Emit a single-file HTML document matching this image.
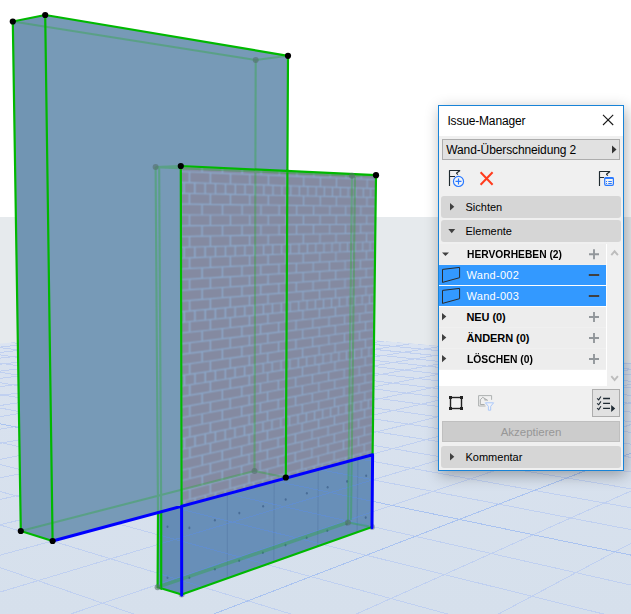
<!DOCTYPE html>
<html><head><meta charset="utf-8"><title>Issue-Manager</title>
<style>
html,body{margin:0;padding:0;background:#fff;}
body{width:631px;height:614px;position:relative;overflow:hidden;font-family:"Liberation Sans",sans-serif;}
.scene{position:absolute;left:0;top:0;display:block;}
.shadow{position:absolute;left:438px;top:105px;width:186px;height:366px;box-shadow:2px 4px 14px 0 rgba(0,0,0,0.31);}
.panel{position:absolute;left:438px;top:105px;width:184px;height:364px;border:1px solid #1883d7;background:#f0f0f0;color:#000;font-size:11px;}
.panel *{position:absolute;box-sizing:border-box;white-space:nowrap;}
.tbar{left:0;top:0;width:184px;height:30px;background:#fff;}
.title{left:8.4px;top:7px;font-size:12px;line-height:16px;color:#000;letter-spacing:-0.17px;}
.dd{left:3px;top:33px;width:178px;height:21px;border:1px solid #adadad;background:#e1e1e1;}
.dd span{left:3.3px;top:2px;font-size:12px;line-height:16px;letter-spacing:-0.12px;}
.hdr{left:2px;width:180px;height:22px;background:#d6d6d6;border-radius:3px;}
.hdr span{left:24.5px;top:4px;line-height:14px;font-size:11px;}
.list{left:0;top:138px;width:168px;height:142px;background:#fff;}
.row{left:0;width:167px;height:21px;background:#ededed;border-bottom:1px solid #f0f0f0;}
.row.sel{background:#3399ff;height:20px;color:#fff;border-bottom:0;}
.row span{left:27.5px;top:3px;line-height:14px;font-size:11px;}
.row b{left:27.5px;top:3px;line-height:14px;font-size:11px;font-weight:bold;}
.sb{left:168px;top:138px;width:16px;height:142px;background:#f0f0f0;}
.btn{border:1px solid #adadad;background:#e1e1e1;}
.acc{left:3px;top:315px;width:178px;height:21px;border:1px solid #bfbfbf;background:#cccccc;color:#979797;text-align:center;}
.acc span{left:0;width:176px;top:2.6px;line-height:14px;font-size:11.5px;text-align:center;}
svg.ic{left:0;top:0;overflow:visible;}

</style></head><body>
<svg class="scene" width="631" height="614" viewBox="0 0 631 614">
<defs><clipPath id="gc"><polygon points="0,343.6 211,326.3 631,362.9 631,614 0,614"/></clipPath><linearGradient id="gf" gradientUnits="userSpaceOnUse" x1="0" y1="326" x2="0" y2="614"><stop offset="0" stop-color="#dde5f3"/><stop offset="0.15" stop-color="#d9e2ef"/><stop offset="1" stop-color="#d6e0ec"/></linearGradient><filter id="bl" x="-5%" y="-5%" width="110%" height="110%"><feConvolveMatrix order="3" kernelMatrix="1 2 1 2 5 2 1 2 1" divisor="17" edgeMode="duplicate" preserveAlpha="true"/></filter><clipPath id="fc"><polygon points="180.8,166 376,175.2 372,527 181.7,594.5"/></clipPath></defs>
<rect width="631" height="614" fill="#fff"/>
<rect y="217" width="631" height="160" fill="#e6eaed"/>
<polygon points="0,343.6 211,326.3 631,362.9 631,614 0,614" fill="url(#gf)"/>
<g clip-path="url(#gc)" fill="none" shape-rendering="crispEdges"><path d="M-46883.6 5051L-45655.3 4921.3M-44863.4 5060.4L-23886.3 2738.6M-42843.3 5069.9L-15921 1940M-40823.1 5079.4L-11790.6 1525.8M-38802.9 5088.8L-9262.9 1272.4M-36782.8 5098.3L-7556.7 1101.3M-34762.6 5107.8L-6327.5 978.1M-32742.4 5117.2L-5399.8 885.1M-30722.3 5126.7L-4674.8 812.4M-28702.1 5136.2L-4092.6 754M-26681.9 5145.6L-3614.8 706.1M-24661.8 5155.1L-3215.6 666.1M-22641.6 5164.5L-2877.1 632.1M-20621.4 5174L-2586.4 603M-18601.3 5183.5L-2334.1 577.7M-16581.1 5192.9L-2113 555.5M-14560.9 5202.4L-1917.7 535.9M-12540.8 5211.9L-1743.9 518.5M-10520.6 5221.3L-1588.3 502.9M-8500.4 5230.8L-1448.1 488.8M-6480.2 5240.3L-1321.2 476.1M-4460.1 5249.7L-1205.7 464.5M-2439.9 5259.2L-1100.2 454M-419.7 5268.7L-1003.4 444.3M1600.4 5278.1L-914.4 435.3M3620.6 5287.6L-832.1 427.1M5640.8 5297L-755.9 419.4M7660.9 5306.5L-685.1 412.3M9681.1 5316L-619.2 405.7M11701.3 5325.4L-557.6 399.6M13721.4 5334.9L-500 393.8M15741.6 5344.4L-446 388.4M17761.8 5353.8L-395.2 383.3M19781.9 5363.3L-347.4 378.5M21802.1 5372.8L-302.4 374M25842.5 5391.7L-219.5 365.6M27862.6 5401.1L-181.3 361.8M29882.8 5410.6L-145.1 358.2M31903 5420.1L-110.7 354.7M33923.1 5429.5L-77.9 351.5M35943.3 5439L-46.7 348.3M37963.5 5448.5L-17 345.3M39983.6 5457.9L11.4 342.5M42003.8 5467.4L38.6 339.8M44024 5476.9L64.5 337.2M46044.1 5486.3L89.4 334.7M48064.3 5495.8L113.2 332.3M50084.5 5505.3L136.1 330M52104.6 5514.7L158.1 327.8M54124.8 5524.2L179.2 325.7M56145 5533.6L199.4 323.6M54425 5525.6L31491.7 3237.8M52637.2 5517.2L21426 2300.4M50849.3 5508.8L16118.2 1806.1M49061.5 5500.5L12839.7 1500.8M47273.6 5492.1L10613.6 1293.5M45485.8 5483.7L9003.1 1143.5M43697.9 5475.3L7783.9 1030M41910.1 5467L6828.9 941M40122.2 5458.6L6060.6 869.5M38334.4 5450.2L5429.1 810.7M36546.5 5441.8L4900.9 761.5M34758.7 5433.5L4452.5 719.7M32970.8 5425.1L4067.1 683.8M31183 5416.7L3732.3 652.6M29395.1 5408.3L3438.8 625.3M27607.3 5400L3179.3 601.2M25819.4 5391.6L2948.3 579.6M24031.6 5383.2L2741.4 560.4M22243.7 5374.8L2554.9 543M20455.9 5366.5L2385.9 527.3M18668 5358.1L2232.2 512.9M16880.2 5349.7L2091.7 499.9M15092.3 5341.3L1962.8 487.9M13304.5 5332.9L1844.1 476.8M11516.6 5324.6L1734.4 466.6M9728.8 5316.2L1632.9 457.1M7940.9 5307.8L1538.5 448.3M6153.1 5299.4L1450.5 440.2M4365.2 5291.1L1368.4 432.5M2577.4 5282.7L1291.6 425.4M789.5 5274.3L1219.5 418.6M-998.3 5265.9L1151.7 412.3M-2786.2 5257.6L1087.9 406.4M-4574 5249.2L1027.8 400.8M-6361.9 5240.8L970.9 395.5M-8149.7 5232.4L917.1 390.5M-9937.6 5224.1L866.1 385.7M-13513.3 5207.3L771.8 376.9M-15301.1 5198.9L728 372.9M-17089 5190.6L686.4 369M-18876.8 5182.2L646.6 365.3M-20664.7 5173.8L608.7 361.8M-22452.5 5165.4L572.4 358.4M-24240.4 5157.1L537.7 355.1M-26028.2 5148.7L504.5 352.1M-27816.1 5140.3L472.6 349.1M-29603.9 5131.9L442 346.2M-31391.8 5123.6L412.7 343.5M-33179.6 5115.2L384.5 340.9M-34967.5 5106.8L357.4 338.4M-36755.3 5098.4L331.3 335.9M-38543.2 5090.1L306.2 333.6M-40331 5081.7L281.9 331.3M-42118.9 5073.3L258.6 329.2M-43906.7 5064.9L236 327.1M-45694.6 5056.5L214.2 325" stroke="#c0d0f0" stroke-width="1"/><path d="M23822.3 5382.2L-259.8 369.7M-11725.4 5215.7L817.8 381.2" stroke="#aac3f0" stroke-width="1"/></g>
<polygon points="12.8,21.5 45.2,15 288,55.8 285.8,477.5 52.6,541 20.8,531" fill="#779ab7"/>
<polygon points="12.8,21.5 45.2,15 52.6,541 20.8,531" fill="#7195b3"/>
<polygon points="158,512.5 181.6,506.2 181.7,594.5 157.6,587.3" fill="#658cb5"/>
<g clip-path="url(#fc)">
<g filter="url(#bl)"><polygon points="176.8,162 380,171.2 376.8,458.5 177.5,510.6" fill="#8ca8ca"/>
<path d="M181.5 166L201.4 167L201.4 171.8L181.6 170.9ZM202.8 167L221.9 167.9L221.8 172.6L202.8 171.8ZM223.2 168L241.5 168.9L241.5 173.5L223.2 172.7ZM242.9 168.9L260.5 169.8L260.5 174.3L242.9 173.5ZM261.8 169.8L278.8 170.6L278.7 175L261.7 174.3ZM280 170.7L296.3 171.4L296.3 175.8L279.9 175.1ZM297.5 171.5L313.3 172.2L313.3 176.5L297.5 175.8ZM314.4 172.3L329.7 173L329.6 177.2L314.4 176.6ZM330.8 173.1L345.5 173.8L345.4 177.9L330.7 177.3ZM346.5 173.8L360.7 174.5L360.7 178.5L346.5 177.9ZM361.8 174.5L375.5 175.2L375.5 179.2L361.7 178.6ZM180.8 172.2L188.7 172.5L188.7 182L180.8 181.8ZM190.2 172.5L209.7 173.3L209.7 182.7L190.2 182.1ZM211.1 173.4L229.8 174.2L229.8 183.4L211.1 182.7ZM231.2 174.2L249.2 175L249.2 184L231.1 183.4ZM250.5 175L267.9 175.8L267.8 184.6L250.5 184ZM269.1 175.8L285.8 176.5L285.8 185.2L269.1 184.6ZM287 176.5L303.2 177.2L303.1 185.7L287 185.2ZM304.3 177.3L319.9 177.9L319.8 186.3L304.3 185.8ZM321 178L336 178.6L335.9 186.8L320.9 186.3ZM337.1 178.6L351.6 179.2L351.5 187.3L337 186.8ZM352.6 179.3L366.7 179.8L366.6 187.8L352.6 187.3ZM367.7 179.9L375.9 180.2L375.9 188.1L367.6 187.8ZM180.8 183L183.3 183.1L183.4 192.7L180.9 192.6ZM184.8 183.2L194 183.4L194 192.9L184.8 192.7ZM195.5 183.5L204.5 183.8L204.5 193.2L195.5 193ZM205.9 183.8L214.8 184.1L214.8 193.4L205.9 193.2ZM216.2 184.1L224.8 184.4L224.8 193.6L216.2 193.4ZM226.2 184.5L234.7 184.7L234.7 193.8L226.2 193.6ZM236 184.8L244.4 185L244.4 194L236 193.9ZM245.7 185.1L253.9 185.3L253.9 194.3L245.7 194.1ZM255.2 185.4L263.2 185.6L263.2 194.5L255.2 194.3ZM264.5 185.6L272.4 185.9L272.3 194.7L264.4 194.5ZM273.6 185.9L281.4 186.2L281.3 194.9L273.6 194.7ZM282.6 186.2L290.2 186.4L290.1 195.1L282.5 194.9ZM291.4 186.5L298.8 186.7L298.8 195.3L291.3 195.1ZM300 186.8L307.3 187L307.3 195.4L299.9 195.3ZM308.5 187L315.7 187.2L315.6 195.6L308.4 195.5ZM316.8 187.3L323.9 187.5L323.8 195.8L316.8 195.7ZM325 187.5L332 187.7L331.9 196L324.9 195.8ZM333 187.8L339.9 188L339.8 196.2L333 196ZM340.9 188L347.7 188.2L347.6 196.3L340.9 196.2ZM348.7 188.3L355.3 188.5L355.2 196.5L348.6 196.4ZM356.4 188.5L362.8 188.7L362.8 196.7L356.3 196.5ZM363.9 188.7L370.2 188.9L370.2 196.8L363.8 196.7ZM371.2 189L375.8 189.1L375.8 197L371.2 196.9ZM180.9 193.9L188.7 194.1L188.7 203.6L180.9 203.5ZM190.2 194.1L209.7 194.5L209.7 203.8L190.2 203.6ZM211.1 194.5L229.8 194.9L229.8 204.1L211.1 203.9ZM231.1 195L249.1 195.3L249.1 204.3L231.1 204.1ZM250.4 195.4L267.8 195.7L267.7 204.5L250.4 204.3ZM269 195.8L285.7 196.1L285.7 204.8L269 204.6ZM286.9 196.1L303 196.5L303 205L286.9 204.8ZM304.2 196.5L319.7 196.8L319.7 205.2L304.1 205ZM320.9 196.8L335.9 197.2L335.8 205.4L320.8 205.2ZM336.9 197.2L351.4 197.5L351.3 205.5L336.9 205.4ZM352.5 197.5L366.5 197.8L366.4 205.7L352.4 205.6ZM367.5 197.8L375.7 198L375.7 205.8L367.4 205.7ZM181.6 204.8L201.4 205L201.4 214.4L181.6 214.3ZM202.8 205L221.8 205.2L221.8 214.4L202.8 214.4ZM223.2 205.2L241.5 205.4L241.5 214.4L223.2 214.4ZM242.8 205.4L260.4 205.6L260.3 214.5L242.8 214.4ZM261.6 205.6L278.6 205.8L278.5 214.5L261.6 214.5ZM279.8 205.8L296.1 206L296.1 214.5L279.8 214.5ZM297.3 206L313.1 206.2L313 214.6L297.3 214.5ZM314.2 206.2L329.4 206.4L329.3 214.6L314.1 214.6ZM330.5 206.4L345.2 206.5L345.1 214.6L330.4 214.6ZM346.2 206.5L360.4 206.7L360.3 214.7L346.2 214.6ZM361.4 206.7L375.1 206.9L375.1 214.7L361.3 214.7ZM180.9 215.6L188.8 215.6L188.8 225.1L180.9 225.2ZM190.2 215.6L209.7 215.6L209.7 224.9L190.2 225.1ZM211.1 215.6L229.8 215.6L229.8 224.7L211.1 224.9ZM231.1 215.6L249.1 215.6L249.1 224.6L231.1 224.7ZM250.4 215.6L267.7 215.7L267.7 224.4L250.4 224.6ZM268.9 215.7L285.6 215.7L285.6 224.3L268.9 224.4ZM286.8 215.7L302.9 215.7L302.9 224.1L286.8 224.3ZM304.1 215.7L319.6 215.7L319.5 224L304 224.1ZM320.7 215.7L335.7 215.7L335.6 223.9L320.6 224ZM336.8 215.7L351.2 215.7L351.2 223.7L336.7 223.9ZM352.3 215.7L366.3 215.7L366.2 223.6L352.2 223.7ZM367.3 215.7L375.5 215.7L375.5 223.5L367.2 223.6ZM181.7 226.4L201.4 226.2L201.4 235.6L181.7 235.9ZM202.8 226.2L221.8 226L221.8 235.2L202.8 235.6ZM223.2 226L241.4 225.8L241.4 234.8L223.2 235.2ZM242.7 225.8L260.3 225.7L260.3 234.5L242.7 234.8ZM261.6 225.6L278.5 225.5L278.5 234.2L261.5 234.5ZM279.7 225.5L296 225.3L296 233.8L279.7 234.1ZM297.2 225.3L312.9 225.2L312.9 233.5L297.1 233.8ZM314.1 225.2L329.2 225L329.2 233.2L314 233.5ZM330.3 225L345 224.9L344.9 232.9L330.3 233.2ZM346.1 224.8L360.2 224.7L360.1 232.7L346 232.9ZM361.2 224.7L374.9 224.6L374.9 232.4L361.2 232.6ZM180.9 237.2L188.8 237.1L188.8 246.5L181 246.7ZM190.2 237L209.7 236.7L209.7 245.9L190.3 246.5ZM211.1 236.6L229.7 236.3L229.7 245.4L211.1 245.9ZM231.1 236.2L249 235.9L249 244.8L231.1 245.3ZM250.3 235.9L267.6 235.5L267.6 244.3L250.3 244.8ZM268.9 235.5L285.5 235.2L285.5 243.8L268.8 244.2ZM286.7 235.1L302.8 234.8L302.7 243.3L286.7 243.7ZM304 234.8L319.5 234.5L319.4 242.8L303.9 243.2ZM320.6 234.5L335.5 234.2L335.5 242.3L320.5 242.8ZM336.6 234.2L351.1 233.9L351 241.9L336.5 242.3ZM352.1 233.9L366.1 233.6L366 241.5L352 241.9ZM367.1 233.6L375.3 233.4L375.2 241.2L367 241.4ZM181 248L183.5 247.9L183.5 257.4L181 257.5ZM184.9 247.9L194.1 247.6L194.1 257L184.9 257.4ZM195.5 247.6L204.5 247.3L204.5 256.6L195.6 257ZM205.9 247.3L214.8 247L214.8 256.2L205.9 256.6ZM216.1 247L224.8 246.7L224.8 255.8L216.1 256.2ZM226.1 246.7L234.6 246.4L234.6 255.5L226.1 255.8ZM235.9 246.4L244.3 246.1L244.2 255.1L235.9 255.4ZM245.6 246.1L253.7 245.8L253.7 254.7L245.5 255ZM255 245.8L263 245.6L263 254.4L255 254.7ZM264.3 245.5L272.1 245.3L272.1 254L264.2 254.3ZM273.4 245.3L281.1 245L281 253.7L273.3 254ZM282.3 245L289.9 244.8L289.8 253.3L282.2 253.6ZM291 244.7L298.5 244.5L298.4 253L291 253.3ZM299.6 244.5L307 244.3L306.9 252.7L299.6 252.9ZM308.1 244.2L315.3 244L315.2 252.3L308 252.6ZM316.4 244L323.5 243.8L323.4 252L316.3 252.3ZM324.6 243.7L331.5 243.5L331.4 251.7L324.5 252ZM332.6 243.5L339.4 243.3L339.3 251.4L332.5 251.7ZM340.5 243.3L347.1 243.1L347.1 251.1L340.4 251.4ZM348.2 243L354.8 242.8L354.7 250.8L348.1 251.1ZM355.8 242.8L362.3 242.6L362.2 250.5L355.7 250.8ZM363.3 242.6L369.7 242.4L369.6 250.2L363.2 250.5ZM370.7 242.4L375.2 242.2L375.1 250L370.6 250.2ZM181 258.8L188.8 258.5L188.8 267.9L181 268.3ZM190.3 258.4L209.7 257.6L209.7 266.9L190.3 267.8ZM211.1 257.6L229.7 256.8L229.7 265.9L211.1 266.8ZM231 256.8L249 256.1L249 265L231 265.8ZM250.3 256L267.5 255.3L267.5 264.1L250.3 264.9ZM268.8 255.3L285.4 254.6L285.4 263.2L268.8 264ZM286.6 254.6L302.7 253.9L302.6 262.4L286.6 263.1ZM303.8 253.9L319.3 253.3L319.3 261.5L303.8 262.3ZM320.4 253.2L335.4 252.6L335.3 260.8L320.4 261.5ZM336.4 252.6L350.9 252L350.8 260L336.4 260.7ZM351.9 252L365.9 251.4L365.8 259.3L351.9 260ZM366.9 251.4L375.1 251L375 258.8L366.8 259.2ZM181.8 269.5L201.4 268.5L201.4 277.8L181.8 279ZM202.9 268.4L221.8 267.5L221.8 276.6L202.9 277.7ZM223.1 267.4L241.3 266.5L241.3 275.5L223.1 276.5ZM242.6 266.5L260.2 265.6L260.1 274.4L242.6 275.4ZM261.4 265.5L278.3 264.7L278.3 273.3L261.4 274.3ZM279.5 264.6L295.8 263.8L295.7 272.3L279.5 273.2ZM297 263.7L312.7 263L312.6 271.3L296.9 272.2ZM313.8 262.9L328.9 262.2L328.9 270.3L313.7 271.2ZM330 262.1L344.7 261.4L344.6 269.4L330 270.3ZM345.7 261.3L359.9 260.6L359.8 268.5L345.6 269.3ZM360.9 260.6L374.5 259.9L374.5 267.6L360.8 268.5ZM181 280.3L188.9 279.8L188.9 289.2L181.1 289.7ZM190.3 279.7L209.7 278.6L209.7 287.8L190.3 289.1ZM211.1 278.5L229.7 277.4L229.7 286.4L211.1 287.7ZM231 277.3L248.9 276.2L248.9 285.1L231 286.3ZM250.2 276.1L267.5 275.1L267.4 283.8L250.2 285ZM268.7 275L285.3 274L285.3 282.6L268.7 283.7ZM286.5 273.9L302.6 273L302.5 281.4L286.5 282.5ZM303.7 272.9L319.2 272L319.1 280.2L303.7 281.3ZM320.3 271.9L335.2 271L335.1 279.1L320.2 280.2ZM336.3 271L350.7 270.1L350.6 278.1L336.2 279.1ZM351.8 270L365.7 269.2L365.6 277L351.7 278ZM366.7 269.1L374.9 268.6L374.8 276.4L366.6 277ZM181.8 290.9L201.5 289.6L201.5 298.8L181.8 300.4ZM202.9 289.5L221.8 288.1L221.8 297.2L202.9 298.7ZM223.1 288.1L241.3 286.8L241.3 295.7L223.1 297.1ZM242.6 286.7L260.1 285.5L260.1 294.2L242.6 295.6ZM261.4 285.4L278.2 284.2L278.2 292.8L261.3 294.1ZM279.4 284.1L295.7 283L295.6 291.4L279.4 292.7ZM296.9 282.9L312.5 281.8L312.5 290.1L296.8 291.3ZM313.7 281.7L328.8 280.7L328.7 288.8L313.6 290ZM329.9 280.6L344.5 279.6L344.4 287.6L329.8 288.7ZM345.5 279.5L359.7 278.5L359.6 286.4L345.5 287.5ZM360.7 278.4L374.3 277.5L374.3 285.2L360.6 286.3ZM181.1 301.7L188.9 301.1L188.9 310.5L181.1 311.1ZM190.3 301L209.7 299.4L209.7 308.6L190.4 310.3ZM211.1 299.3L229.7 297.8L229.6 306.8L211.1 308.5ZM231 297.7L248.9 296.3L248.9 305.1L231 306.7ZM250.2 296.2L267.4 294.8L267.4 303.5L250.1 305ZM268.6 294.7L285.2 293.4L285.2 301.9L268.6 303.4ZM286.4 293.3L302.4 292L302.4 300.4L286.4 301.8ZM303.6 291.9L319 290.7L319 298.9L303.5 300.3ZM320.1 290.6L335.1 289.4L335 297.5L320.1 298.8ZM336.1 289.3L350.5 288.1L350.5 296.1L336.1 297.4ZM351.6 288.1L365.5 286.9L365.4 294.8L351.5 296ZM366.5 286.9L374.7 286.2L374.6 293.9L366.4 294.7ZM181.1 312.4L183.6 312.2L183.6 321.6L181.1 321.8ZM185 312L194.2 311.2L194.2 320.5L185.1 321.4ZM195.6 311.1L204.6 310.3L204.6 319.5L195.6 320.4ZM206 310.2L214.7 309.4L214.7 318.5L206 319.4ZM216.1 309.2L224.7 308.5L224.7 317.5L216.1 318.4ZM226.1 308.3L234.5 307.6L234.5 316.5L226.1 317.4ZM235.8 307.5L244.1 306.7L244.1 315.6L235.8 316.4ZM245.4 306.6L253.5 305.9L253.5 314.7L245.4 315.5ZM254.8 305.8L262.8 305L262.8 313.7L254.8 314.5ZM264 304.9L271.9 304.2L271.8 312.9L264 313.6ZM273.1 304.1L280.8 303.4L280.7 312L273.1 312.7ZM282 303.3L289.5 302.6L289.5 311.1L281.9 311.9ZM290.7 302.5L298.1 301.9L298.1 310.3L290.7 311ZM299.3 301.7L306.6 301.1L306.5 309.4L299.2 310.1ZM307.7 301L314.9 300.3L314.8 308.6L307.7 309.3ZM316 300.2L323 299.6L323 307.8L315.9 308.5ZM324.1 299.5L331 298.9L331 307L324.1 307.7ZM332.1 298.8L338.9 298.2L338.8 306.2L332 306.9ZM340 298.1L346.6 297.5L346.6 305.5L339.9 306.1ZM347.7 297.4L354.2 296.8L354.2 304.7L347.6 305.4ZM355.3 296.7L361.7 296.1L361.6 304L355.2 304.6ZM362.7 296L369.1 295.5L369 303.2L362.6 303.9ZM370.1 295.4L374.6 295L374.6 302.7L370 303.1ZM181.1 323.1L188.9 322.3L188.9 331.6L181.1 332.5ZM190.4 322.1L209.7 320.2L209.7 329.4L190.4 331.5ZM211.1 320.1L229.6 318.2L229.6 327.2L211.1 329.2ZM231 318.1L248.8 316.3L248.8 325.1L231 327.1ZM250.1 316.2L267.3 314.4L267.3 323.1L250.1 325ZM268.6 314.3L285.1 312.7L285.1 321.2L268.5 323ZM286.3 312.5L302.3 310.9L302.3 319.3L286.3 321ZM303.5 310.8L318.9 309.3L318.8 317.5L303.4 319.2ZM320 309.2L334.9 307.7L334.8 315.7L319.9 317.4ZM336 307.6L350.4 306.1L350.3 314.1L335.9 315.6ZM351.4 306L365.3 304.6L365.2 312.4L351.3 314ZM366.3 304.5L374.5 303.7L374.5 311.4L366.2 312.3ZM181.9 333.6L201.5 331.5L201.5 340.7L181.9 343ZM202.9 331.3L221.7 329.3L221.7 338.3L202.9 340.5ZM223.1 329.1L241.2 327.1L241.2 336L223.1 338.1ZM242.5 327L260 325.1L259.9 333.8L242.5 335.8ZM261.2 324.9L278 323.1L278 331.6L261.2 333.6ZM279.2 322.9L295.5 321.1L295.4 329.5L279.2 331.5ZM296.6 321L312.3 319.3L312.2 327.6L296.6 329.4ZM313.4 319.2L328.5 317.5L328.4 325.6L313.3 327.4ZM329.6 317.4L344.2 315.8L344.1 323.8L329.5 325.5ZM345.2 315.7L359.3 314.1L359.2 322L345.1 323.6ZM360.3 314L373.9 312.5L373.9 320.2L360.2 321.8ZM181.2 344.4L189 343.4L189 352.8L181.2 353.8ZM190.4 343.3L209.7 341L209.7 350.1L190.4 352.6ZM211.1 340.8L229.6 338.6L229.6 347.5L211.1 349.9ZM230.9 338.4L248.8 336.3L248.8 345.1L230.9 347.4ZM250.1 336.1L267.2 334L267.2 342.7L250 344.9ZM268.5 333.9L285 331.9L285 340.4L268.4 342.5ZM286.2 331.8L302.2 329.8L302.1 338.2L286.2 340.2ZM303.3 329.7L318.8 327.9L318.7 336L303.3 338ZM319.9 327.7L334.7 325.9L334.7 334L319.8 335.9ZM335.8 325.8L350.2 324.1L350.1 332L335.7 333.8ZM351.2 324L365.1 322.3L365 330.1L351.1 331.9ZM366.1 322.2L374.3 321.2L374.3 328.9L366 329.9ZM181.9 354.9L201.5 352.4L201.5 361.6L181.9 364.3ZM202.9 352.2L221.7 349.7L221.7 358.8L202.9 361.4ZM223.1 349.6L241.2 347.2L241.2 356.1L223.1 358.6ZM242.5 347L259.9 344.8L259.9 353.5L242.5 355.9ZM261.2 344.6L278 342.4L277.9 351L261.1 353.3ZM279.2 342.3L295.3 340.2L295.3 348.5L279.1 350.8ZM296.5 340L312.1 338L312.1 346.2L296.5 348.4ZM313.3 337.8L328.3 335.9L328.3 344L313.2 346.1ZM329.4 335.7L344 333.8L343.9 341.8L329.4 343.8ZM345 333.7L359.1 331.9L359 339.7L345 341.6ZM360.1 331.7L373.8 330L373.7 337.7L360.1 339.6ZM181.2 365.6L189 364.5L189 373.8L181.2 375ZM190.4 364.3L209.7 361.6L209.7 370.7L190.4 373.6ZM211.1 361.4L229.6 358.8L229.6 367.8L211.1 370.5ZM230.9 358.7L248.7 356.2L248.7 364.9L230.9 367.6ZM250 356L267.2 353.6L267.1 362.2L250 364.7ZM268.4 353.4L284.9 351.1L284.9 359.6L268.4 362ZM286.1 350.9L302.1 348.7L302 357L286.1 359.4ZM303.2 348.5L318.6 346.4L318.6 354.5L303.2 356.8ZM319.7 346.2L334.6 344.1L334.5 352.2L319.7 354.4ZM335.7 344L350 342L349.9 349.9L335.6 352ZM351.1 341.8L364.9 339.9L364.9 347.7L351 349.7ZM365.9 339.8L374.1 338.6L374.1 346.3L365.9 347.5ZM181.2 376.2L183.7 375.8L183.7 385.2L181.3 385.6ZM185.2 375.6L194.3 374.3L194.3 383.5L185.2 384.9ZM195.7 374L204.6 372.7L204.6 381.9L195.7 383.3ZM206 372.5L214.7 371.2L214.7 380.2L206 381.6ZM216.1 371L224.7 369.7L224.7 378.7L216.1 380ZM226 369.5L234.4 368.2L234.4 377.1L226 378.5ZM235.7 368L244 366.8L244 375.6L235.7 376.9ZM245.3 366.6L253.4 365.4L253.3 374.1L245.3 375.4ZM254.6 365.2L262.6 364L262.6 372.7L254.6 373.9ZM263.8 363.8L271.6 362.7L271.6 371.2L263.8 372.5ZM272.8 362.5L280.5 361.3L280.5 369.8L272.8 371ZM281.7 361.1L289.2 360L289.2 368.4L281.7 369.6ZM290.4 359.8L297.8 358.7L297.7 367.1L290.4 368.2ZM298.9 358.6L306.2 357.5L306.1 365.7L298.9 366.9ZM307.3 357.3L314.5 356.2L314.4 364.4L307.3 365.6ZM315.6 356.1L322.6 355L322.5 363.1L315.5 364.3ZM323.7 354.9L330.6 353.8L330.5 361.9L323.6 363ZM331.6 353.7L338.4 352.6L338.3 360.6L331.6 361.7ZM339.5 352.5L346.1 351.5L346 359.4L339.4 360.5ZM347.2 351.3L353.7 350.4L353.6 358.2L347.1 359.2ZM354.7 350.2L361.2 349.2L361.1 357L354.7 358ZM362.2 349.1L368.5 348.1L368.4 355.9L362.1 356.9ZM369.5 348L374 347.3L374 355L369.4 355.7ZM181.3 386.8L189 385.5L189 394.8L181.3 396.1ZM190.5 385.3L209.7 382.2L209.7 391.3L190.5 394.6ZM211.1 382L229.6 379.1L229.5 388L211.1 391.1ZM230.9 378.9L248.7 376L248.6 384.8L230.9 387.8ZM250 375.8L267.1 373.1L267.1 381.7L249.9 384.6ZM268.3 372.9L284.8 370.2L284.8 378.7L268.3 381.5ZM286 370L302 367.5L301.9 375.8L286 378.5ZM303.1 367.3L318.5 364.9L318.4 373L303 375.6ZM319.6 364.7L334.4 362.3L334.4 370.3L319.5 372.8ZM335.5 362.1L349.8 359.8L349.8 367.7L335.4 370.1ZM350.9 359.7L364.7 357.5L364.7 365.2L350.8 367.5ZM365.7 357.3L373.9 356L373.9 363.7L365.7 365ZM182 397.2L201.5 393.9L201.5 403.1L182 406.5ZM202.9 393.7L221.7 390.5L221.7 399.5L202.9 402.8ZM223 390.3L241.1 387.2L241.1 396L223 399.2ZM242.4 387L259.8 384L259.7 392.7L242.4 395.8ZM261 383.8L277.8 381L277.7 389.5L261 392.5ZM279 380.8L295.1 378L295.1 386.4L278.9 389.3ZM296.3 377.8L311.9 375.2L311.8 383.4L296.2 386.2ZM313 375L328 372.4L328 380.5L312.9 383.2ZM329.1 372.3L343.7 369.8L343.6 377.7L329.1 380.3ZM344.7 369.6L358.8 367.2L358.7 375L344.6 377.5ZM359.8 367.1L373.4 364.8L373.3 372.4L359.7 374.8ZM181.3 407.9L189.1 406.5L189.1 415.8L181.3 417.2ZM190.5 406.3L209.7 402.8L209.7 411.9L190.5 415.5ZM211.1 402.6L229.5 399.2L229.5 408.1L211.1 411.6ZM230.9 399L248.6 395.8L248.6 404.5L230.8 407.9ZM249.9 395.6L267 392.5L267 401.1L249.9 404.3ZM268.2 392.3L284.7 389.3L284.7 397.7L268.2 400.8ZM285.9 389.1L301.8 386.3L301.8 394.5L285.9 397.5ZM303 386L318.3 383.3L318.3 391.4L302.9 394.3ZM319.4 383.1L334.3 380.4L334.2 388.4L319.4 391.2ZM335.3 380.2L349.7 377.7L349.6 385.5L335.3 388.2ZM350.7 377.5L364.6 375L364.5 382.7L350.6 385.3ZM365.6 374.8L373.7 373.3L373.7 381L365.5 382.5ZM182.1 418.3L201.5 414.6L201.5 423.7L182.1 427.6ZM202.9 414.3L221.7 410.8L221.7 419.7L202.9 423.5ZM223 410.5L241 407.1L241 415.9L223 419.5ZM242.3 406.9L259.7 403.6L259.7 412.2L242.3 415.6ZM261 403.3L277.7 400.2L277.6 408.6L260.9 412ZM278.9 400L295 396.9L295 405.2L278.8 408.4ZM296.2 396.7L311.7 393.7L311.7 401.9L296.1 405ZM312.9 393.5L327.9 390.7L327.8 398.7L312.8 401.7ZM329 390.5L343.5 387.7L343.4 395.6L328.9 398.5ZM344.5 387.5L358.6 384.8L358.5 392.6L344.5 395.4ZM359.6 384.7L373.2 382.1L373.1 389.7L359.5 392.4ZM181.4 429L189.1 427.4L189.1 436.6L181.4 438.2ZM190.5 427.1L209.7 423.3L209.7 432.3L190.5 436.3ZM211.1 423L229.5 419.4L229.5 428.2L211.1 432.1ZM230.8 419.1L248.6 415.6L248.5 424.3L230.8 427.9ZM249.8 415.3L266.9 411.9L266.9 420.4L249.8 424ZM268.2 411.6L284.6 408.4L284.6 416.8L268.1 420.2ZM285.8 408.1L301.7 405L301.7 413.2L285.8 416.5ZM302.9 404.7L318.2 401.7L318.1 409.8L302.8 413ZM319.3 401.5L334.1 398.5L334 406.5L319.2 409.5ZM335.2 398.3L349.5 395.4L349.4 403.3L335.1 406.2ZM350.5 395.2L364.4 392.5L364.3 400.2L350.5 403.1ZM365.4 392.3L373.6 390.6L373.5 398.3L365.3 400ZM181.4 439.5L183.8 438.9L183.9 448.2L181.4 448.7ZM185.3 438.6L194.3 436.7L194.3 445.9L185.3 447.9ZM195.7 436.5L204.6 434.6L204.6 443.7L195.8 445.6ZM206 434.3L214.7 432.5L214.7 441.5L206 443.4ZM216.1 432.2L224.6 430.4L224.6 439.3L216.1 441.2ZM225.9 430.1L234.3 428.4L234.3 437.2L225.9 439ZM235.6 428.1L243.8 426.4L243.8 435.1L235.6 436.9ZM245.1 426.1L253.2 424.4L253.2 433.1L245.1 434.8ZM254.5 424.2L262.4 422.5L262.3 431.1L254.4 432.8ZM263.6 422.3L271.4 420.6L271.3 429.1L263.6 430.8ZM272.6 420.4L280.2 418.8L280.2 427.2L272.6 428.9ZM281.4 418.5L288.9 417L288.9 425.3L281.4 426.9ZM290.1 416.7L297.4 415.2L297.4 423.4L290 425ZM298.6 414.9L305.8 413.4L305.8 421.6L298.6 423.2ZM307 413.2L314.1 411.7L314 419.8L306.9 421.4ZM315.2 411.5L322.2 410L322.1 418.1L315.1 419.6ZM323.3 409.8L330.1 408.3L330 416.3L323.2 417.8ZM331.2 408.1L337.9 406.7L337.9 414.6L331.1 416.1ZM339 406.5L345.6 405.1L345.5 413L338.9 414.4ZM346.7 404.9L353.2 403.5L353.1 411.3L346.6 412.7ZM354.2 403.3L360.6 402L360.5 409.7L354.1 411.1ZM361.6 401.7L367.9 400.4L367.8 408.1L361.5 409.5ZM368.9 400.2L373.5 399.3L373.4 406.9L368.8 407.9ZM181.4 449.9L189.1 448.3L189.1 457.4L181.4 459.2ZM190.6 447.9L209.7 443.7L209.7 452.8L190.6 457.1ZM211.1 443.4L229.5 439.4L229.5 448.3L211.1 452.4ZM230.8 439.1L248.5 435.2L248.5 443.9L230.8 448ZM249.8 435L266.9 431.2L266.8 439.7L249.8 443.6ZM268.1 431L284.5 427.4L284.5 435.7L268.1 439.5ZM285.7 427.1L301.6 423.6L301.5 431.8L285.7 435.5ZM302.7 423.4L318.1 420L318 428.1L302.7 431.6ZM319.2 419.8L334 416.5L333.9 424.5L319.1 427.8ZM335 416.3L349.3 413.2L349.3 421L335 424.2ZM350.4 412.9L364.2 409.9L364.1 417.6L350.3 420.7ZM365.2 409.7L373.4 407.9L373.3 415.5L365.1 417.4ZM182.1 460.3L201.6 455.8L201.6 464.9L182.2 469.5ZM203 455.5L221.6 451.2L221.6 460.1L203 464.5ZM223 450.9L241 446.8L240.9 455.5L223 459.8ZM242.3 446.5L259.6 442.5L259.5 451.1L242.2 455.2ZM260.8 442.2L277.5 438.4L277.5 446.8L260.8 450.8ZM278.7 438.2L294.8 434.5L294.7 442.7L278.7 446.6ZM296 434.2L311.5 430.6L311.4 438.8L295.9 442.5ZM312.6 430.4L327.6 427L327.5 435L312.5 438.5ZM328.7 426.7L343.2 423.4L343.1 431.3L328.6 434.7ZM344.2 423.2L358.2 420L358.1 427.7L344.1 431ZM359.2 419.7L372.8 416.6L372.7 424.2L359.1 427.4ZM181.4 470.9L189.2 469L189.2 478.2L181.5 480.1ZM190.6 468.7L209.7 464.1L209.7 473.1L190.6 477.8ZM211.1 463.8L229.4 459.4L229.4 468.2L211.1 472.8ZM230.8 459.1L248.5 454.9L248.4 463.5L230.8 467.9ZM249.7 454.6L266.8 450.5L266.8 459L249.7 463.2ZM268 450.2L284.4 446.3L284.4 454.6L268 458.7ZM285.6 446L301.5 442.2L301.4 450.4L285.6 454.3ZM302.6 441.9L317.9 438.3L317.9 446.4L302.6 450.1ZM319 438L333.8 434.5L333.7 442.4L319 446.1ZM334.9 434.3L349.2 430.8L349.1 438.6L334.8 442.2ZM350.2 430.6L364 427.3L363.9 435L350.1 438.4ZM365 427.1L373.2 425.1L373.1 432.7L364.9 434.7ZM182.2 481.1L201.6 476.3L201.6 485.4L182.2 490.3ZM203 476L221.6 471.3L221.6 480.2L203 485ZM223 471L240.9 466.5L240.9 475.2L223 479.9ZM242.2 466.2L259.5 461.9L259.5 470.5L242.2 474.9ZM260.7 461.6L277.4 457.5L277.4 465.9L260.7 470.2ZM278.6 457.2L294.7 453.2L294.6 461.4L278.6 465.6ZM295.8 452.9L311.4 449L311.3 457.1L295.8 461.1ZM312.5 448.8L327.4 445L327.4 453L312.4 456.9ZM328.5 444.8L343 441.2L342.9 449L328.5 452.7ZM344 440.9L358 437.4L358 445.2L344 448.7ZM359 437.2L372.6 433.8L372.5 441.4L359 444.9ZM181.5 491.7L189.2 489.8L189.2 498.9L181.5 500.9ZM190.6 489.4L209.7 484.5L209.7 493.4L190.6 498.5ZM211.1 484.1L229.4 479.4L229.4 488.2L211.1 493ZM230.7 479L248.4 474.5L248.4 483.1L230.7 487.8ZM249.7 474.1L266.7 469.7L266.7 478.2L249.7 482.7ZM267.9 469.4L284.3 465.2L284.3 473.5L267.9 477.9ZM285.5 464.9L301.4 460.8L301.3 469L285.5 473.2ZM302.5 460.5L317.8 456.5L317.7 464.6L302.5 468.7ZM318.9 456.3L333.7 452.4L333.6 460.3L318.8 464.3ZM334.7 452.2L349 448.5L348.9 456.3L334.6 460.1ZM350 448.2L363.8 444.7L363.7 452.3L349.9 456ZM364.8 444.4L373 442.3L372.9 449.9L364.7 452ZM181.5 502.2L184 501.5L184 505.9L181.5 506.6ZM185.4 501.1L194.4 498.7L194.4 503.1L185.4 505.5ZM195.8 498.3L204.7 495.9L204.7 500.3L195.8 502.7ZM206 495.6L214.7 493.3L214.7 497.5L206 499.9ZM216.1 492.9L224.6 490.6L224.5 494.9L216.1 497.2ZM225.9 490.3L234.2 488L234.2 492.2L225.9 494.5ZM235.5 487.7L243.7 485.5L243.7 489.6L235.5 491.9ZM245 485.1L253 483L253 487.1L245 489.3ZM254.3 482.6L262.2 480.5L262.2 484.6L254.3 486.8ZM263.4 480.2L271.1 478.1L271.1 482.2L263.4 484.3ZM272.4 477.8L280 475.8L279.9 479.8L272.3 481.8ZM281.1 475.4L288.6 473.4L288.6 477.4L281.1 479.5ZM289.8 473.1L297.1 471.2L297.1 475.1L289.8 477.1ZM298.3 470.9L305.5 468.9L305.4 472.8L298.2 474.8ZM306.6 468.6L313.7 466.7L313.6 470.6L306.6 472.5ZM314.8 466.4L321.7 464.6L321.7 468.4L314.8 470.3ZM322.8 464.3L329.7 462.4L329.6 466.3L322.8 468.1ZM330.7 462.2L337.5 460.4L337.4 464.1L330.7 466ZM338.5 460.1L345.1 458.3L345.1 462L338.5 463.8ZM346.2 458L352.7 456.3L352.6 460L346.1 461.8ZM353.7 456L360.1 454.3L360 458L353.6 459.7ZM361.1 454L367.3 452.3L367.3 456L361 457.7ZM368.3 452.1L372.9 450.9L372.8 454.5L368.3 455.7Z" fill="#848aa1"/></g>
<polygon points="181.5,506.6 372.8,454.5 372,527 181.7,594.5" fill="#688fb8"/>
<path d="M227.4 494.1L227.4 578.3M274.2 481.3L273.8 561.8M318.3 469.3L317.7 546.3M357.9 458.6L357.1 532.3" stroke="#557aa6" stroke-width="1.2" fill="none" opacity="0.5"/>
<g fill="#3f628c" opacity="0.75"><ellipse cx="189.4" cy="527.9" rx="1" ry="1.3"/><ellipse cx="189.4" cy="577.8" rx="1" ry="1.3"/><ellipse cx="214.9" cy="520.3" rx="1" ry="1.3"/><ellipse cx="214.9" cy="569.2" rx="1" ry="1.3"/><ellipse cx="239.3" cy="513.1" rx="1" ry="1.3"/><ellipse cx="239.2" cy="560.8" rx="1" ry="1.3"/><ellipse cx="263.1" cy="506.2" rx="1" ry="1.3"/><ellipse cx="262.9" cy="552.8" rx="1" ry="1.3"/><ellipse cx="285.7" cy="499.5" rx="1" ry="1.3"/><ellipse cx="285.5" cy="545.1" rx="1" ry="1.3"/><ellipse cx="306.9" cy="493.3" rx="1" ry="1.3"/><ellipse cx="306.6" cy="537.8" rx="1" ry="1.3"/><ellipse cx="327.6" cy="487.2" rx="1" ry="1.3"/><ellipse cx="327.3" cy="530.8" rx="1" ry="1.3"/><ellipse cx="347.1" cy="481.4" rx="1" ry="1.3"/><ellipse cx="346.7" cy="524.2" rx="1" ry="1.3"/><ellipse cx="366.2" cy="475.8" rx="1" ry="1.3"/><ellipse cx="365.7" cy="517.6" rx="1" ry="1.3"/></g>
</g>
<clipPath id="cc"><polygon points="158,512.5 181.6,506.2 372.6,454.8 372,527 181.7,594.5 157.6,587.3"/></clipPath>
<g clip-path="url(#cc)" fill="none" shape-rendering="crispEdges"><path d="M-46883.6 5051L-45655.3 4921.3M-44863.4 5060.4L-23886.3 2738.6M-42843.3 5069.9L-15921 1940M-40823.1 5079.4L-11790.6 1525.8M-38802.9 5088.8L-9262.9 1272.4M-36782.8 5098.3L-7556.7 1101.3M-34762.6 5107.8L-6327.5 978.1M-32742.4 5117.2L-5399.8 885.1M-30722.3 5126.7L-4674.8 812.4M-28702.1 5136.2L-4092.6 754M-26681.9 5145.6L-3614.8 706.1M-24661.8 5155.1L-3215.6 666.1M-22641.6 5164.5L-2877.1 632.1M-20621.4 5174L-2586.4 603M-18601.3 5183.5L-2334.1 577.7M-16581.1 5192.9L-2113 555.5M-14560.9 5202.4L-1917.7 535.9M-12540.8 5211.9L-1743.9 518.5M-10520.6 5221.3L-1588.3 502.9M-8500.4 5230.8L-1448.1 488.8M-6480.2 5240.3L-1321.2 476.1M-4460.1 5249.7L-1205.7 464.5M-2439.9 5259.2L-1100.2 454M-419.7 5268.7L-1003.4 444.3M1600.4 5278.1L-914.4 435.3M3620.6 5287.6L-832.1 427.1M5640.8 5297L-755.9 419.4M7660.9 5306.5L-685.1 412.3M9681.1 5316L-619.2 405.7M11701.3 5325.4L-557.6 399.6M13721.4 5334.9L-500 393.8M15741.6 5344.4L-446 388.4M17761.8 5353.8L-395.2 383.3M19781.9 5363.3L-347.4 378.5M21802.1 5372.8L-302.4 374M25842.5 5391.7L-219.5 365.6M27862.6 5401.1L-181.3 361.8M29882.8 5410.6L-145.1 358.2M31903 5420.1L-110.7 354.7M33923.1 5429.5L-77.9 351.5M35943.3 5439L-46.7 348.3M37963.5 5448.5L-17 345.3M39983.6 5457.9L11.4 342.5M42003.8 5467.4L38.6 339.8M44024 5476.9L64.5 337.2M46044.1 5486.3L89.4 334.7M48064.3 5495.8L113.2 332.3M50084.5 5505.3L136.1 330M52104.6 5514.7L158.1 327.8M54124.8 5524.2L179.2 325.7M56145 5533.6L199.4 323.6M54425 5525.6L31491.7 3237.8M52637.2 5517.2L21426 2300.4M50849.3 5508.8L16118.2 1806.1M49061.5 5500.5L12839.7 1500.8M47273.6 5492.1L10613.6 1293.5M45485.8 5483.7L9003.1 1143.5M43697.9 5475.3L7783.9 1030M41910.1 5467L6828.9 941M40122.2 5458.6L6060.6 869.5M38334.4 5450.2L5429.1 810.7M36546.5 5441.8L4900.9 761.5M34758.7 5433.5L4452.5 719.7M32970.8 5425.1L4067.1 683.8M31183 5416.7L3732.3 652.6M29395.1 5408.3L3438.8 625.3M27607.3 5400L3179.3 601.2M25819.4 5391.6L2948.3 579.6M24031.6 5383.2L2741.4 560.4M22243.7 5374.8L2554.9 543M20455.9 5366.5L2385.9 527.3M18668 5358.1L2232.2 512.9M16880.2 5349.7L2091.7 499.9M15092.3 5341.3L1962.8 487.9M13304.5 5332.9L1844.1 476.8M11516.6 5324.6L1734.4 466.6M9728.8 5316.2L1632.9 457.1M7940.9 5307.8L1538.5 448.3M6153.1 5299.4L1450.5 440.2M4365.2 5291.1L1368.4 432.5M2577.4 5282.7L1291.6 425.4M789.5 5274.3L1219.5 418.6M-998.3 5265.9L1151.7 412.3M-2786.2 5257.6L1087.9 406.4M-4574 5249.2L1027.8 400.8M-6361.9 5240.8L970.9 395.5M-8149.7 5232.4L917.1 390.5M-9937.6 5224.1L866.1 385.7M-13513.3 5207.3L771.8 376.9M-15301.1 5198.9L728 372.9M-17089 5190.6L686.4 369M-18876.8 5182.2L646.6 365.3M-20664.7 5173.8L608.7 361.8M-22452.5 5165.4L572.4 358.4M-24240.4 5157.1L537.7 355.1M-26028.2 5148.7L504.5 352.1M-27816.1 5140.3L472.6 349.1M-29603.9 5131.9L442 346.2M-31391.8 5123.6L412.7 343.5M-33179.6 5115.2L384.5 340.9M-34967.5 5106.8L357.4 338.4M-36755.3 5098.4L331.3 335.9M-38543.2 5090.1L306.2 333.6M-40331 5081.7L281.9 331.3M-42118.9 5073.3L258.6 329.2M-43906.7 5064.9L236 327.1M-45694.6 5056.5L214.2 325M23822.3 5382.2L-259.8 369.7M-11725.4 5215.7L817.8 381.2" stroke="#5c8fe6" stroke-opacity="0.45" stroke-width="1"/></g>
<g fill="#3f628c" opacity="0.75"><ellipse cx="167.5" cy="526.8" rx="1" ry="1.3"/><ellipse cx="167.5" cy="577.8" rx="1" ry="1.3"/></g>
<path d="M12.8 21.5L255.7 60M255.7 60L288 55.8M255.7 60L254.5 471M20.8 531L254.5 471M254.5 471L285.8 477.5M155.6 167.1L180.8 166M155.6 167.1L352 175.8M352 175.8L376 175.2M155.6 167.1L158 512.5M159.2 168.5L161.2 512M352 175.8L348 522.4M355 177L351 520M348 522.4L372 527" stroke="#18b018" stroke-opacity="0.3" stroke-width="2.1" fill="none"/>
<g fill="#8a9099" opacity="0.7"><circle cx="181.7" cy="594.5" r="3"/><circle cx="372" cy="527" r="3"/></g>
<path d="M160.6 586.1L348 522.4" stroke="#18b018" stroke-opacity="0.3" stroke-width="3.6" fill="none"/>
<path d="M12.8 21.5L45.2 15M45.2 15L288 55.8M288 55.8L285.8 477.5M45.2 15L52.6 541M12.8 21.5L20.8 531M20.8 531L52.6 541M180.8 166L376 175.2M376 175.2L372.6 454.8M180.8 166L181.6 506.2M181.7 594.5L372 527M157.6 587.3L181.7 594.5M158 512.5L157.6 587.3M161.2 512L161.2 589" stroke="#00b800" stroke-width="2.2" fill="none" stroke-linecap="round"/>
<path d="M52.6 541L372.6 454.8M372.6 454.8L372 527.8M181.6 506.2L181.7 595.3" stroke="#0000ff" stroke-width="3" fill="none" stroke-linecap="round"/>
<g fill="#55706c" opacity="0.6"><circle cx="255.7" cy="60" r="3"/><circle cx="254.5" cy="471" r="3"/><circle cx="155.6" cy="167.1" r="3"/><circle cx="352" cy="175.8" r="3"/><circle cx="348" cy="522.4" r="3"/><circle cx="157.6" cy="587.3" r="3"/></g>
<g fill="#000"><circle cx="12.8" cy="21.5" r="3.1"/><circle cx="45.2" cy="15" r="3.1"/><circle cx="288" cy="55.8" r="3.1"/><circle cx="20.8" cy="531" r="3.1"/><circle cx="52.6" cy="541" r="3.1"/><circle cx="285.8" cy="477.5" r="3.1"/><circle cx="180.8" cy="166" r="3.1"/><circle cx="376" cy="175.2" r="3.1"/></g>
</svg>
<div class="shadow"></div>
<div class="panel">
 <div class="tbar"><span class="title">Issue-Manager</span></div>
 <div class="dd"><span>Wand-Überschneidung 2</span></div>
 <div class="hdr" style="top:90px"><span>Sichten</span></div>
 <div class="hdr" style="top:114px"><span>Elemente</span></div>
 <div class="list">
  <div class="row" style="top:0"><b style="transform:scaleX(0.932);transform-origin:0 0">HERVORHEBEN (2)</b></div>
  <div class="row sel" style="top:21px"><span style="letter-spacing:0.28px">Wand-002</span></div>
  <div class="row sel" style="top:42px"><span style="letter-spacing:0.28px">Wand-003</span></div>
  <div class="row" style="top:63px"><b style="letter-spacing:-0.1px">NEU (0)</b></div>
  <div class="row" style="top:84px"><b style="letter-spacing:-0.08px">ÄNDERN (0)</b></div>
  <div class="row" style="top:105px"><b style="transform:scaleX(0.939);transform-origin:0 0">LÖSCHEN (0)</b></div>
 </div>
 <div class="sb"></div>
 <div class="btn" style="left:153px;top:283px;width:28px;height:28px"></div>
 <div class="acc"><span>Akzeptieren</span></div>
 <div class="hdr" style="top:340px"><span>Kommentar</span></div>
 <svg class="ic" width="184" height="364" viewBox="439 106 184 364">
  <!-- close X -->
  <path d="M603 114.8L613.2 125M613.2 114.8L603 125" stroke="#1a1a1a" stroke-width="1.1" fill="none"/>
  <!-- dropdown arrow -->
  <path d="M612 145.5L616.5 149.5L612 153.5Z" fill="#333"/>
  <!-- flag plus -->
  <path d="M449.5 185.9V170.5H460L456.4 173.2L457.9 174.6M449.5 176.5H455" stroke="#1f2a30" stroke-width="1.15" fill="none" stroke-linejoin="bevel"/>
  <circle cx="458.5" cy="181.4" r="5.05" fill="#f3f5f8" stroke="#2878ff" stroke-width="1.15"/>
  <path d="M455.5 181.4H461.5M458.5 178.4V184.4" stroke="#2878ff" stroke-width="1.15" fill="none"/>
  <!-- red X -->
  <path d="M480.6 172.2L492.6 184.8M492.6 172.2L480.6 184.8" stroke="#ff3b1d" stroke-width="2" fill="none"/>
  <!-- flag list -->
  <path d="M599.5 185.9V171.5H610L606.4 174.3L607.9 175.7M599.5 177.5H604" stroke="#1f2a30" stroke-width="1.15" fill="none" stroke-linejoin="bevel"/>
  <rect x="604.7" y="177.5" width="8.7" height="7.8" rx="1.3" fill="#f6f4f0" stroke="#2878ff" stroke-width="1.2"/>
  <path d="M604.7 178.2H613.4" stroke="#2878ff" stroke-width="1.5"/>
  <path d="M606 181.5H607M608.3 181.5H611.8M606 183.5H607M608.3 183.5H611.8" stroke="#2878ff" stroke-width="1"/>
  <!-- header triangles -->
  <path d="M450 203L454.3 206.7L450 210.4Z" fill="#404040"/>
  <path d="M448.3 229L455.2 229L451.75 233.2Z" fill="#404040"/>
  <path d="M450 453L454.3 456.7L450 460.4Z" fill="#404040"/>
  <!-- tree triangles -->
  <path d="M442 252.4L449 252.4L445.5 256Z" fill="#404040"/>
  <path d="M442 313L446.3 316.6L442 320.2Z" fill="#404040"/>
  <path d="M442 334L446.3 337.6L442 341.2Z" fill="#404040"/>
  <path d="M442 355L446.3 358.6L442 362.2Z" fill="#404040"/>
  <!-- wall icons -->
  <path d="M442.5 269.4L459.6 267.4V277.7L442.5 282.4Z" fill="none" stroke="#2b2b2b" stroke-width="1"/>
  <path d="M442.5 290.4L459.6 288.4V298.7L442.5 303.4Z" fill="none" stroke="#2b2b2b" stroke-width="1"/>
  <!-- plus / minus -->
  <g stroke="#92979b" stroke-width="1.9" fill="none">
   <path d="M589 254.2H599M594 249.2V259.2"/>
   <path d="M589 317H599M594 312V322"/>
   <path d="M589 338H599M594 333V343"/>
   <path d="M589 359H599M594 354V364"/>
  </g>
  <path d="M588.8 274.9H599.2M588.8 295.9H599.2" stroke="#404040" stroke-width="2" fill="none"/>
  <!-- scrollbar chevrons -->
  <path d="M611.3 255.2L614.6 251.3L617.9 255.2" stroke="#bdbdbd" stroke-width="1.9" fill="none"/>
  <path d="M611.3 376.2L614.6 380.1L617.9 376.2" stroke="#bdbdbd" stroke-width="1.9" fill="none"/>
  <!-- square icon -->
  <rect x="450.5" y="397.5" width="11" height="11" fill="none" stroke="#222" stroke-width="1.4"/>
  <g fill="#222"><rect x="449" y="396" width="3" height="3"/><rect x="460" y="396" width="3" height="3"/><rect x="449" y="407" width="3" height="3"/><rect x="460" y="407" width="3" height="3"/></g>
  <!-- filter icon (disabled) -->
  <path d="M485.5 406H478.6V395.6H491.6V399.8" fill="none" stroke="#aeb1b1" stroke-width="1"/>
  <path d="M484.6 404.5H480.3V399.8L482.7 397.3L487.8 400.4" fill="none" stroke="#a9acac" stroke-width="1"/>
  <path d="M484.2 398.6L487.8 400.6L484.6 400.6Z" fill="#a9acac"/>
  <path d="M485.4 402.8H493.6L490.7 406.3V410.2H488.4V406.3Z" fill="#f1f3f7" stroke="#a4c4fa" stroke-width="0.9" stroke-linejoin="round"/>
  <!-- checklist icon -->
  <g stroke="#1f2a33" stroke-width="1.3" fill="none">
   <path d="M603.1 398.5H610M603.1 403.4H610M603.1 408.3H610"/>
   <path d="M597.1 398.4L598.7 399.8L600.9 396.5M597.1 403.3L598.7 404.7L600.9 401.4M597.1 408.2L598.7 409.6L600.9 406.3" stroke-width="1.1"/>
  </g>
  <path d="M611.2 405.1L615.2 408.5L611.2 411.9Z" fill="#1f2a33"/>
 </svg>
</div>

</body></html>
